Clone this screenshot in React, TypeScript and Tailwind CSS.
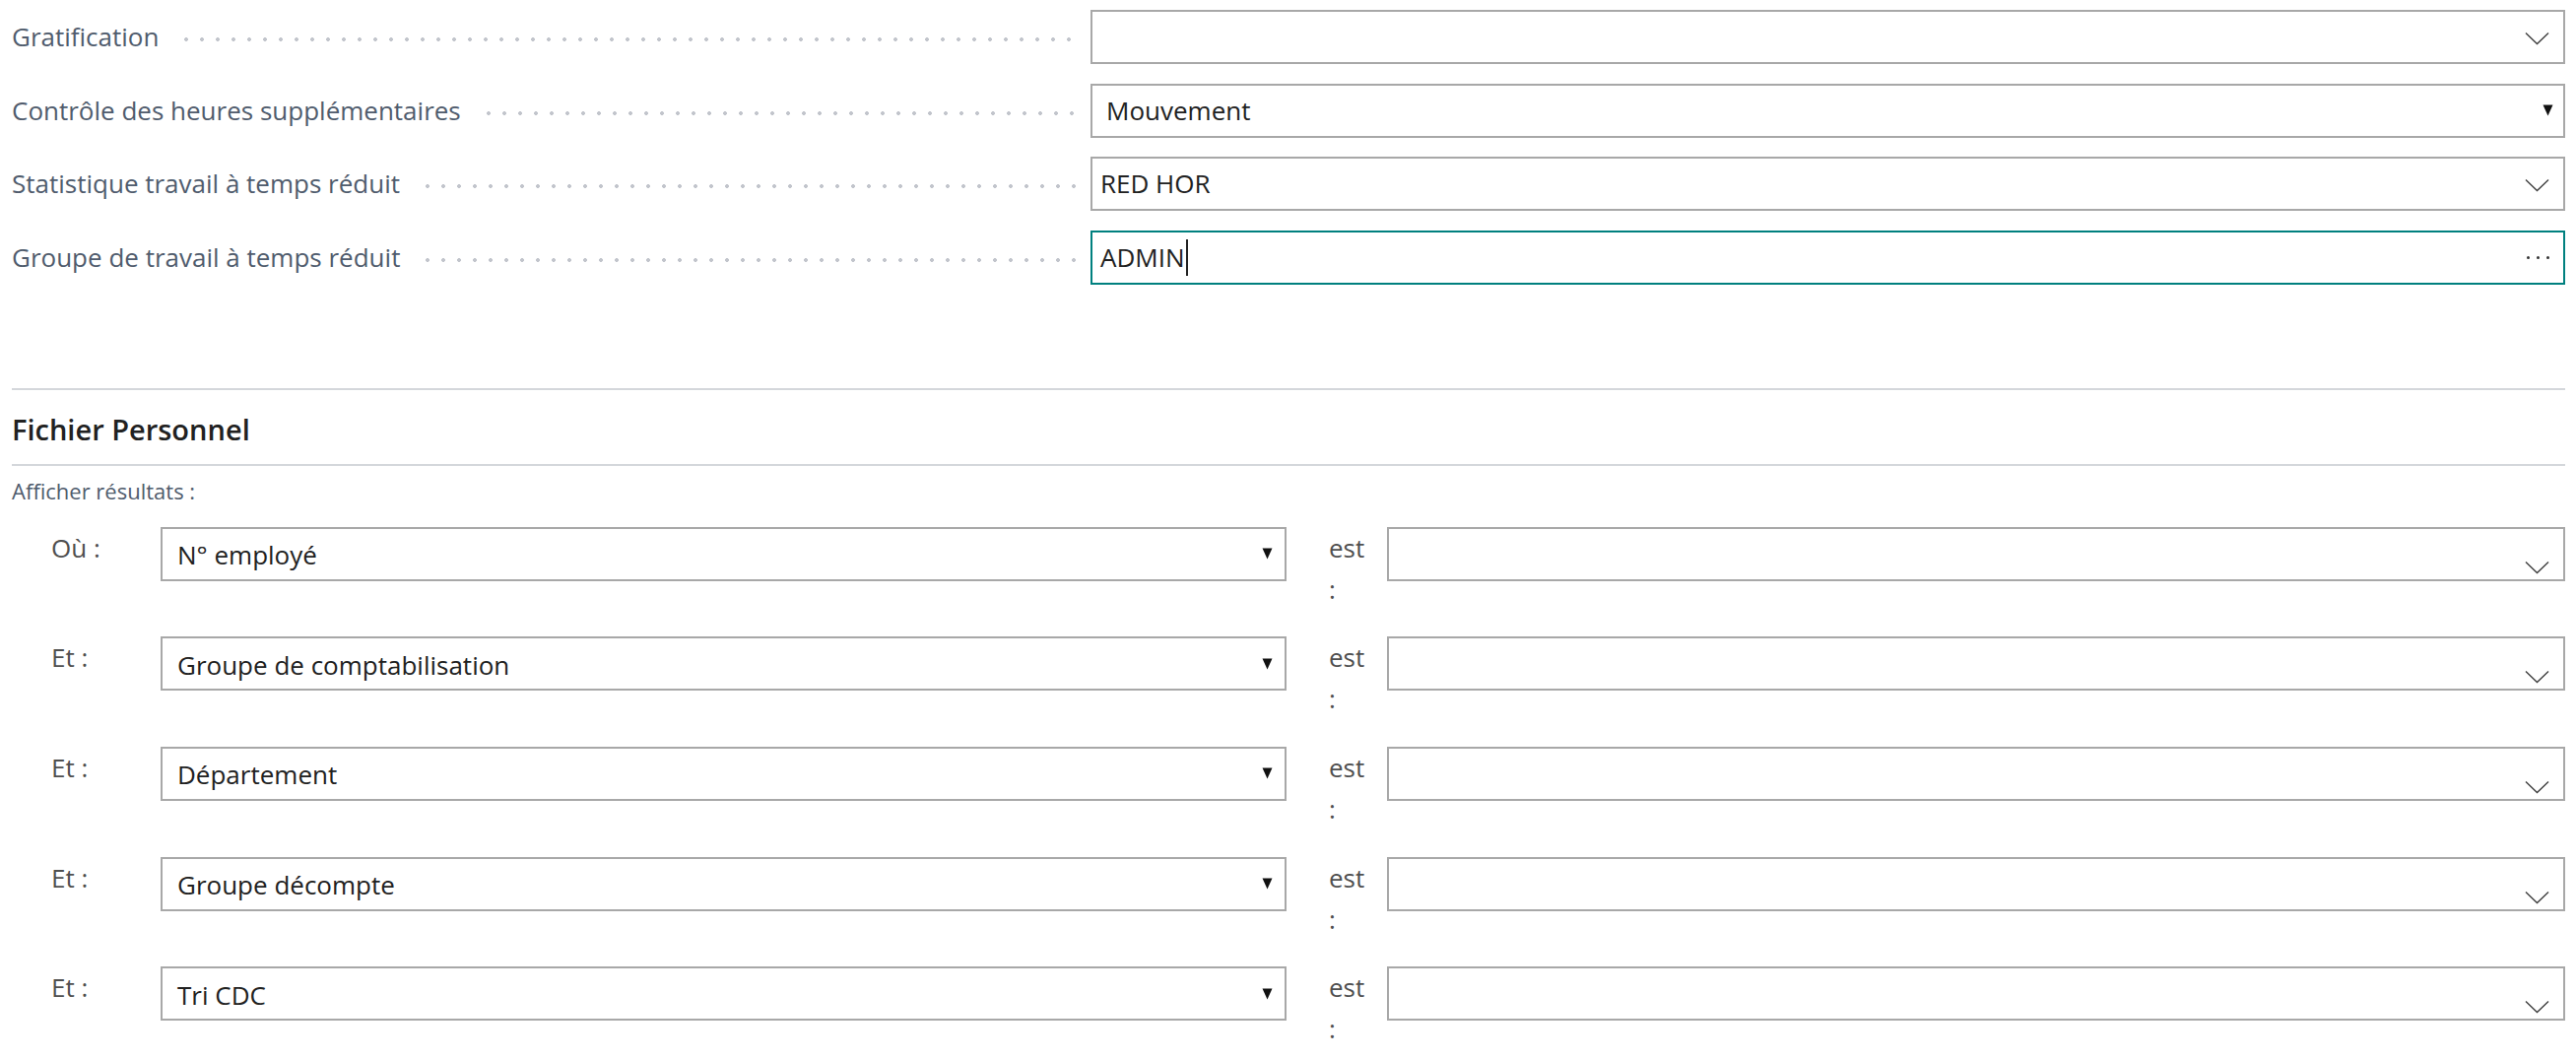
import React from 'react'

const topFields = [
  { label: 'Gratification', value: '', kind: 'chevron' },
  { label: 'Contrôle des heures supplémentaires', value: 'Mouvement', kind: 'select' },
  { label: 'Statistique travail à temps réduit', value: 'RED HOR', kind: 'chevron' },
  { label: 'Groupe de travail à temps réduit', value: 'ADMIN', kind: 'lookup' },
]

const filters = [
  { op: 'Où :', field: 'N° employé' },
  { op: 'Et :', field: 'Groupe de comptabilisation' },
  { op: 'Et :', field: 'Département' },
  { op: 'Et :', field: 'Groupe décompte' },
  { op: 'Et :', field: 'Tri CDC' },
]

function Chevron() {
  return (
    <svg width="25" height="14" viewBox="0 0 25 14" fill="none">
      <path d="M1 1.5 L12.5 12.5 L24 1.5" stroke="#3a3a3a" strokeWidth="1.3" />
    </svg>
  )
}

function Triangle() {
  return (
    <svg width="11" height="12" viewBox="0 0 11 12">
      <polygon points="0.5,0.5 10.5,0.5 5.5,11.5" fill="#111" />
    </svg>
  )
}

function TopField({ label, value, kind }: { label: string; value: string; kind: string }) {
  const focused = kind === 'lookup'
  return (
    <div className="flex h-[55px] items-center">
      <div className="flex w-[1095px] items-center">
        <span className="text-[26px] whitespace-nowrap text-[#505c6d]">{label}</span>
        <div className="mt-[5px] mr-[8px] ml-[20px] h-[6px] flex-1 bg-[radial-gradient(circle,#c2c5cc_1.7px,transparent_2.2px)] bg-[length:16px_6px] bg-repeat-x" />
      </div>
      <div
        className={
          focused
            ? 'flex h-full flex-1 items-center border-2 border-[#00807f] bg-white'
            : 'flex h-full flex-1 items-center border-2 border-[#a8a8a8] bg-white'
        }
      >
        <div
          className={
            kind === 'select'
              ? 'flex flex-1 items-center pl-[14px] text-[26px] text-[#212121]'
              : 'flex flex-1 items-center pl-[8px] text-[26px] text-[#212121]'
          }
        >
          {value}
          {focused && <span className="ml-[1px] h-[37px] w-[2px] bg-[#222]" />}
        </div>
        {kind === 'chevron' && (
          <div className="mt-[2px] mr-[14px]">
            <Chevron />
          </div>
        )}
        {kind === 'select' && (
          <div className="mr-[10px]">
            <Triangle />
          </div>
        )}
        {kind === 'lookup' && (
          <div className="mr-[14px] flex gap-[7px]">
            <span className="h-[3px] w-[3px] rounded-full bg-[#333]" />
            <span className="h-[3px] w-[3px] rounded-full bg-[#333]" />
            <span className="h-[3px] w-[3px] rounded-full bg-[#333]" />
          </div>
        )}
      </div>
    </div>
  )
}

function FilterRow({ op, field }: { op: string; field: string }) {
  return (
    <div className="flex items-start">
      <div className="w-[151px] pl-[40px] text-[26px] leading-[42px] text-[#4f4f4f]">{op}</div>
      <div className="flex h-[55px] w-[1143px] items-center border-2 border-[#a8a8a8] bg-white">
        <span className="flex-1 pl-[15px] pt-[3px] text-[26px] text-[#212121]">{field}</span>
        <div className="mr-[12px]">
          <Triangle />
        </div>
      </div>
      <div className="w-[102px] pl-[43px]">
        <div className="w-[38px] text-[26px] leading-[42px] text-[#4f4f4f]">est :</div>
      </div>
      <div className="flex h-[55px] flex-1 items-end justify-end border-2 border-[#a8a8a8] bg-white pb-[5px]">
        <div className="mr-[14px]">
          <Chevron />
        </div>
      </div>
    </div>
  )
}

export default function App() {
  return (
    <div className="h-[1076px] overflow-hidden bg-white pr-[11px] pl-[12px] font-['Open_Sans',sans-serif]">
      <div className="flex flex-col gap-[19.5px] pt-[10px]">
        {topFields.map((f) => (
          <TopField key={f.label} {...f} />
        ))}
      </div>

      <div className="mt-[105px] h-[2px] bg-[#d4d7db]" />
      <h2 className="mt-[20px] text-[29px] leading-[40px] font-semibold text-[#212121]">Fichier Personnel</h2>
      <div className="mt-[15px] h-[2px] bg-[#d4d7db]" />
      <p className="mt-[10px] text-[22px] leading-[30px] text-[#505c6d]">Afficher résultats :</p>

      <div className="mt-[22px] flex flex-col gap-[27.7px]">
        {filters.map((f) => (
          <FilterRow key={f.field} {...f} />
        ))}
      </div>
    </div>
  )
}
